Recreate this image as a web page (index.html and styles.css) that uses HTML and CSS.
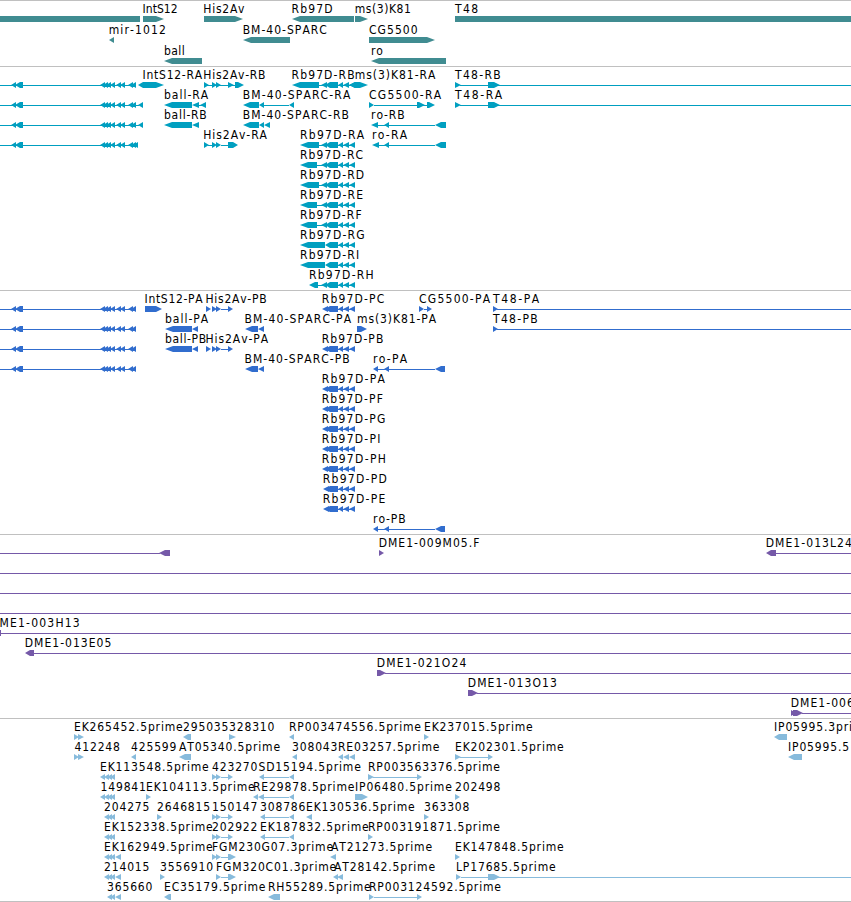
FILE: index.html
```html
<!DOCTYPE html>
<html lang="en">
<head>
    <meta charset="utf-8" />
    <meta name="viewport" content="width=device-width, initial-scale=1" />
    <title>Genome Browser</title>
    <link rel="stylesheet" href="styles.css">
</head>
<body>

<!-- glyphs shared by several rows -->
<svg class="defs">
    <defs>
        <path id="exons" d="M0 16h136v1H0zM11 16l5-3v6zM15 16l5-3h3v6h-3zM100 16l5-3v6zM103 16l5-3v6zM106 16l5-3v6zM110 16l5-3v6zM116 16l5-3v6zM120 16l5-3v6zM128 16l5-3v6zM131 16l5-3v6z"/>
        <path id="rb-tail" d="M325 16l5-3h8v6h-8zM338 16l5-3v6zM343 16l6-3v6zM349 16l6-3v6zM338 16h17v1h-17z"/>
        <path id="rb-gap" d="M317 16h8v1h-8zM321 16l6-3v6z"/>
        <path id="ro" d="M378 16h57v1h-57zM384 16l5-3v6zM435 16l6-3h4v6h-4z"/>
        <path id="his" d="M212 13l5 3-5 3zM216 13l5 3-5 3zM221 16h7v1h-7z"/>
        <path id="his-end" d="M228 13l5 3-5 3z"/>
        <path id="cluster" d="M104 16l5-3v6zM107 16l5-3v6zM110 16l5-3v6z"/>
        <path id="bm" d="M264 16h25v1h-25zM289 16l5-3v6z"/>
    </defs>
</svg>

<div class="tracks">
    <div class="track genes">
        <svg class="row">
            <text x="142.5" y="10" textLength="36">IntS12</text>
            <text x="203.3" y="10" textLength="42">His2Av</text>
            <text x="291.5" y="10" textLength="42">Rb97D</text>
            <text x="354.7" y="10" textLength="57">ms(3)K81</text>
            <text x="455" y="10" textLength="24">T48</text>
            <path d="M0 13h140v6H0z"/>
            <path d="M143 13h13l8 3-8 3h-13z"/>
            <path d="M204 13h31l8 3-8 3h-31z"/>
            <path d="M292 16l8-3h54v6h-54z"/>
            <path d="M355 13h5l8 3-8 3h-5z"/>
            <path d="M455 13h396v6H455z"/>
        </svg>
        <svg class="row">
            <text x="108.7" y="10" textLength="58">mir-1012</text>
            <text x="242.7" y="10" textLength="85">BM-40-SPARC</text>
            <text x="369" y="10" textLength="49.5">CG5500</text>
            <path d="M109 16l5-3v6z"/>
            <path d="M243 16l8-3h39v6h-39z"/>
            <path d="M369 13h58l8 3-8 3h-58z"/>
        </svg>
        <svg class="row">
            <text x="164" y="10" textLength="21.5">ball</text>
            <text x="371" y="10">ro</text>
            <path d="M164 16l8-3h30v6h-30z"/>
            <path d="M371 16l8-3h67v6h-67z"/>
        </svg>
    </div>

    <div class="track transcripts">
        <svg class="row">
            <text x="142.5" y="10" textLength="60.5">IntS12-RA</text>
            <text x="203.3" y="10" textLength="63">His2Av-RB</text>
            <text x="291.5" y="10" textLength="64">Rb97D-RB</text>
            <text x="354.7" y="10" textLength="81.5">ms(3)K81-RA</text>
            <text x="455" y="10" textLength="46.5">T48-RB</text>
            <use href="#exons"/>
            <path d="M138 16l5-3h13l8 3-8 3h-13z"/>
            <path d="M204 13l5 3-5 3zM208 16h27v1h-27zM228 13l6 3-6 3zM235 13h3l6 3-6 3h-3z"/>
            <use href="#his"/>
            <path d="M292 16l8-3h19v6h-19z"/>
            <use href="#rb-gap"/>
            <use href="#rb-tail"/>
            <path d="M349 16l6-3h5l8 3-8 3h-5z"/>
            <path d="M455 13l6 3-6 3zM460 16h391v1H460zM488 13h6l6 3-6 3h-6z"/>
        </svg>
        <svg class="row">
            <text x="164" y="10" textLength="45">ball-RA</text>
            <text x="242.7" y="10" textLength="108.5">BM-40-SPARC-RA</text>
            <text x="369" y="10" textLength="73">CG5500-RA</text>
            <text x="455" y="10" textLength="48">T48-RA</text>
            <use href="#exons"/>
            <path d="M136 16h3v1h-3zM138 16l5-3v6z"/>
            <path d="M164 16l8-3h20v6h-20zM192 16l7-3v6zM200 16l6-3v6zM198 16h3v1h-3z"/>
            <path d="M243 16l7-3h9v6h-9zM259 16l5-3v6z"/>
            <use href="#bm"/>
            <path d="M369 13l5 3-5 3zM374 16h53v1h-53zM417 13h2l6 3-6 3h-2zM427 13h2l6 3-6 3h-2z"/>
            <path d="M455 13l6 3-6 3zM460 16h391v1H460zM488 13h6l6 3-6 3h-6z"/>
        </svg>
        <svg class="row">
            <text x="164" y="10" textLength="43.5">ball-RB</text>
            <text x="242.7" y="10" textLength="107">BM-40-SPARC-RB</text>
            <text x="371" y="10" textLength="34.5">ro-RB</text>
            <use href="#exons"/>
            <path d="M136 16h3v1h-3zM138 16l5-3v6z"/>
            <path d="M164 16l8-3h20v6h-20zM192 16l7-3v6z"/>
            <path d="M243 16l7-3h9v6h-9zM259 16l5-3v6zM264 16l6-3v6z"/>
            <path d="M371 16l7-3v6zM445 13h1v6h-1z"/>
            <use href="#ro"/>
        </svg>
        <svg class="row">
            <text x="203.3" y="10" textLength="64.5">His2Av-RA</text>
            <text x="300" y="10" textLength="65">Rb97D-RA</text>
            <text x="372" y="10" textLength="36">ro-RA</text>
            <use href="#exons"/>
            <path d="M133 16l5-3v6z"/>
            <path d="M204 13l5 3-5 3zM208 16h5v1h-5zM228 13h5l5 3-5 3h-5z"/>
            <use href="#his"/>
            <path d="M300 16l8-3h11v6h-11z"/>
            <use href="#rb-gap"/>
            <use href="#rb-tail"/>
            <path d="M372 16l7-3v6zM445 13h1v6h-1z"/>
            <use href="#ro"/>
        </svg>
        <svg class="row">
            <text x="300" y="10" textLength="64">Rb97D-RC</text>
            <path d="M300 16l8-3h9v6h-9z"/>
            <use href="#rb-gap"/>
            <use href="#rb-tail"/>
        </svg>
        <svg class="row">
            <text x="300" y="10" textLength="65">Rb97D-RD</text>
            <path d="M300 16l8-3h11v6h-11z"/>
            <use href="#rb-gap"/>
            <use href="#rb-tail"/>
        </svg>
        <svg class="row">
            <text x="300" y="10" textLength="64">Rb97D-RE</text>
            <path d="M300 16l8-3h9v6h-9z"/>
            <use href="#rb-gap"/>
            <use href="#rb-tail"/>
        </svg>
        <svg class="row">
            <text x="300" y="10" textLength="62.5">Rb97D-RF</text>
            <path d="M300 16l8-3h9v6h-9z"/>
            <use href="#rb-gap"/>
            <use href="#rb-tail"/>
        </svg>
        <svg class="row">
            <text x="300" y="10" textLength="65.5">Rb97D-RG</text>
            <path d="M300 16l8-3h17v6h-17z"/>
            <use href="#rb-tail"/>
        </svg>
        <svg class="row">
            <text x="300" y="10" textLength="60">Rb97D-RI</text>
            <path d="M300 16l8-3h17v6h-17z"/>
            <use href="#rb-tail"/>
        </svg>
        <svg class="row">
            <text x="309" y="10" textLength="65.5">Rb97D-RH</text>
            <path d="M309 16l6-3h3v6h-3z"/>
            <use href="#rb-gap"/>
            <use href="#rb-tail"/>
        </svg>
    </div>

    <div class="track proteins">
        <svg class="row">
            <text x="144.5" y="10" textLength="59">IntS12-PA</text>
            <text x="205.5" y="10" textLength="62">His2Av-PB</text>
            <text x="321.7" y="10" textLength="63.5">Rb97D-PC</text>
            <text x="419" y="10" textLength="72">CG5500-PA</text>
            <text x="493" y="10" textLength="47">T48-PA</text>
            <use href="#exons"/>
            <path d="M145 13h11l6 3-6 3h-11z"/>
            <path d="M206 13l5 3-5 3z"/>
            <use href="#his"/>
            <use href="#his-end"/>
            <path d="M322 16l6-3v6z"/>
            <use href="#rb-tail"/>
            <path d="M419 13l5 3-5 3zM424 16h3v1h-3zM427 13l5 3-5 3z"/>
            <path d="M493 13l5 3-5 3zM497 16h354v1H497z"/>
        </svg>
        <svg class="row">
            <text x="165" y="10" textLength="44">ball-PA</text>
            <text x="244.5" y="10" textLength="107.5">BM-40-SPARC-PA</text>
            <text x="357" y="10" textLength="80">ms(3)K81-PA</text>
            <text x="493" y="10" textLength="45.5">T48-PB</text>
            <use href="#exons"/>
            <path d="M165 16l8-3h19v6h-19zM192 16l6-3v6z"/>
            <path d="M245 16l7-3h6v6h-6zM258 16l6-3v6z"/>
            <path d="M357 13h4l6 3-6 3h-4z"/>
            <path d="M493 13l5 3-5 3zM497 16h354v1H497z"/>
        </svg>
        <svg class="row">
            <text x="165" y="10" textLength="42">ball-PB</text>
            <text x="205.5" y="10" textLength="63.5">His2Av-PA</text>
            <text x="321.7" y="10" textLength="62.5">Rb97D-PB</text>
            <use href="#exons"/>
            <path d="M165 16l8-3h19v6h-19zM192 16l6-3v6z"/>
            <path d="M206 13l5 3-5 3z"/>
            <use href="#his"/>
            <use href="#his-end"/>
            <path d="M322 16l6-3v6z"/>
            <use href="#rb-tail"/>
        </svg>
        <svg class="row">
            <text x="244.5" y="10" textLength="106">BM-40-SPARC-PB</text>
            <text x="373" y="10" textLength="35">ro-PA</text>
            <use href="#exons"/>
            <path d="M245 16l7-3h6v6h-6zM258 16l6-3v6z"/>
            <path d="M373 16l5-3v6z"/>
            <use href="#ro"/>
        </svg>
        <svg class="row">
            <text x="321.7" y="10" textLength="64">Rb97D-PA</text>
            <path d="M322 16l6-3v6z"/>
            <use href="#rb-tail"/>
        </svg>
        <svg class="row">
            <text x="321.7" y="10" textLength="62">Rb97D-PF</text>
            <path d="M322 16l6-3v6z"/>
            <use href="#rb-tail"/>
        </svg>
        <svg class="row">
            <text x="321.7" y="10" textLength="64.5">Rb97D-PG</text>
            <path d="M322 16l6-3v6z"/>
            <use href="#rb-tail"/>
        </svg>
        <svg class="row">
            <text x="321.7" y="10" textLength="59.5">Rb97D-PI</text>
            <path d="M322 16l6-3v6z"/>
            <use href="#rb-tail"/>
        </svg>
        <svg class="row">
            <text x="321.7" y="10" textLength="65">Rb97D-PH</text>
            <path d="M322 16l6-3v6z"/>
            <use href="#rb-tail"/>
        </svg>
        <svg class="row">
            <text x="322.7" y="10" textLength="65">Rb97D-PD</text>
            <path d="M323 16l6-3v6z"/>
            <use href="#rb-tail"/>
        </svg>
        <svg class="row">
            <text x="322.7" y="10" textLength="63.5">Rb97D-PE</text>
            <path d="M323 16l6-3v6z"/>
            <use href="#rb-tail"/>
        </svg>
        <svg class="row">
            <text x="373" y="10" textLength="33.5">ro-PB</text>
            <path d="M373 16l5-3v6z"/>
            <use href="#ro"/>
        </svg>
    </div>

    <div class="track clones">
        <svg class="row">
            <text x="378.7" y="10" textLength="101.5">DME1-009M05.F</text>
            <text x="765.7" y="10" textLength="87">DME1-013L24</text>
            <path d="M0 16h160v1H0zM159 16l6-3h5v6h-5z"/>
            <path d="M379 13l5 3-5 3z"/>
            <path d="M766 16l5-3h5v6h-5zM776 16h75v1h-75z"/>
        </svg>
        <svg class="row"><path d="M0 16h851v1H0z"/></svg>
        <svg class="row"><path d="M0 16h851v1H0z"/></svg>
        <svg class="row"><path d="M0 16h851v1H0z"/></svg>
        <svg class="row">
            <text x="-0.5" y="10" textLength="81">ME1-003H13</text>
            <path d="M0 13h1v6H0zM0 16h851v1H0z"/>
        </svg>
        <svg class="row">
            <text x="24.7" y="10" textLength="87.5">DME1-013E05</text>
            <path d="M25 16l5-3h4v6h-4zM34 16h817v1H34z"/>
        </svg>
        <svg class="row">
            <text x="376.7" y="10" textLength="90.5">DME1-021O24</text>
            <path d="M377 13h3l6 3-6 3h-3zM385 16h466v1H385z"/>
        </svg>
        <svg class="row">
            <text x="467.7" y="10" textLength="90">DME1-013O13</text>
            <path d="M468 13h4l6 3-6 3h-4zM477 16h374v1H477z"/>
        </svg>
        <svg class="row">
            <text x="790.7" y="10" textLength="64">DME1-006</text>
            <path d="M791 13l5 3-5 3zM793 13h4l6 3-6 3h-4zM802 16h49v1h-49z"/>
        </svg>
    </div>

    <div class="track cdnas">
        <svg class="row">
            <text x="74" y="10">EK265452.5prime</text>
            <text x="183" y="10">295035</text>
            <text x="229" y="10">328310</text>
            <text x="289" y="10">RP003474556.5prime</text>
            <text x="424" y="10">EK237015.5prime</text>
            <text x="774" y="10">IP05995.3pri</text>
            <path d="M74 13l5 3-5 3zM78 13l6 3-6 3z"/>
            <path d="M183 16l5-3h3v6h-3z"/>
            <path d="M229 13l7 3-7 3z"/>
            <path d="M289 16l5-3v6z"/>
            <path d="M424 13l5 3-5 3z"/>
            <path d="M774 16l5-3h8v6h-8z"/>
        </svg>
        <svg class="row">
            <text x="74.5" y="10">412248</text>
            <text x="131" y="10">425599</text>
            <text x="179" y="10">AT05340.5prime</text>
            <text x="292" y="10">308043</text>
            <text x="338" y="10">RE03257.5prime</text>
            <text x="455" y="10">EK202301.5prime</text>
            <text x="788" y="10">IP05995.5</text>
            <path d="M74 13l5 3-5 3zM78 13l6 3-6 3z"/>
            <path d="M131 16l5-3v6z"/>
            <path d="M179 16l6-3h6v6h-6z"/>
            <path d="M292 16l5-3v6z"/>
            <path d="M338 16l5-3v6zM343 16l6-3v6zM349 16l6-3v6z"/>
            <path d="M455 13l6 3-6 3zM460 16h28v1h-28zM488 13l5 3-5 3z"/>
            <path d="M788 16l6-3h8v6h-8z"/>
        </svg>
        <svg class="row">
            <text x="100" y="10">EK113548.5prime</text>
            <text x="212" y="10">423270</text>
            <text x="258.5" y="10">SD15194.5prime</text>
            <text x="368" y="10">RP003563376.5prime</text>
            <path d="M100 16l5-3v6z"/>
            <use href="#cluster"/>
            <use href="#his"/>
            <use href="#his-end"/>
            <path d="M259 16l5-3v6z"/>
            <use href="#bm"/>
            <path d="M368 13l6 3-6 3zM373 16h44v1h-44zM417 13l5 3-5 3z"/>
        </svg>
        <svg class="row">
            <text x="100.5" y="10">149841</text>
            <text x="146" y="10">EK104113.5prime</text>
            <text x="253" y="10">RE29878.5prime</text>
            <text x="355" y="10">IP06480.5prime</text>
            <text x="455" y="10">202498</text>
            <path d="M100 16l5-3v6z"/>
            <use href="#cluster"/>
            <path d="M146 13l5 3-5 3z"/>
            <path d="M253 16l5-3v6zM258 16l6-3v6z"/>
            <use href="#bm"/>
            <path d="M355 13h7l6 3-6 3h-7z"/>
            <path d="M455 13l5 3-5 3z"/>
        </svg>
        <svg class="row">
            <text x="104" y="10">204275</text>
            <text x="157" y="10">2646815</text>
            <text x="212" y="10">150147</text>
            <text x="260" y="10">308786</text>
            <text x="306" y="10">EK130536.5prime</text>
            <text x="424" y="10">363308</text>
            <use href="#cluster"/>
            <path d="M157 13l5 3-5 3z"/>
            <use href="#his"/>
            <use href="#his-end"/>
            <path d="M260 16l5-3v6z"/>
            <use href="#bm"/>
            <path d="M306 16l6-3v6z"/>
            <path d="M424 13l5 3-5 3z"/>
        </svg>
        <svg class="row">
            <text x="104" y="10">EK152338.5prime</text>
            <text x="212" y="10">202922</text>
            <text x="260" y="10">EK187832.5prime</text>
            <text x="368" y="10">RP003191871.5prime</text>
            <use href="#cluster"/>
            <use href="#his"/>
            <use href="#his-end"/>
            <path d="M260 16l5-3v6z"/>
            <use href="#bm"/>
            <path d="M368 13l5 3-5 3z"/>
        </svg>
        <svg class="row">
            <text x="104" y="10">EK162949.5prime</text>
            <text x="212" y="10">FGM230G07.3prime</text>
            <text x="331" y="10">AT21273.5prime</text>
            <text x="455" y="10">EK147848.5prime</text>
            <use href="#cluster"/>
            <path d="M115 16l6-3v6z"/>
            <use href="#his"/>
            <path d="M228 13h2l6 3-6 3h-2z"/>
            <path d="M330 16l6-3v6z"/>
            <path d="M455 13l5 3-5 3z"/>
        </svg>
        <svg class="row">
            <text x="104" y="10">214015</text>
            <text x="160" y="10">3556910</text>
            <text x="216" y="10">FGM320C01.3prime</text>
            <text x="334" y="10">AT28142.5prime</text>
            <text x="456" y="10">LP17685.5prime</text>
            <use href="#cluster"/>
            <path d="M115 16l6-3v6z"/>
            <path d="M160 13l5 3-5 3z"/>
            <path d="M216 13l5 3-5 3zM221 16h7v1h-7zM228 13h2l6 3-6 3h-2z"/>
            <path d="M333 16l5-3v6zM337 16l6-3v6z"/>
            <path d="M456 13l5 3-5 3zM461 16h390v1H461zM488 13h6l6 3-6 3h-6z"/>
        </svg>
        <svg class="row">
            <text x="107" y="10">365660</text>
            <text x="164" y="10">EC35179.5prime</text>
            <text x="268" y="10">RH55289.5prime</text>
            <text x="369" y="10">RP003124592.5prime</text>
            <path d="M107 16l5-3v6zM110 16l5-3v6zM115 16l6-3v6z"/>
            <path d="M164 16l5-3h2v6h-2z"/>
            <path d="M268 16l6-3h6v6h-6z"/>
            <path d="M369 13l5 3-5 3zM374 16h43v1h-43zM417 13l5 3-5 3z"/>
        </svg>
    </div>
</div>

</body>
</html>
```
FILE: styles.css
```css
* {
    margin: 0;
    padding: 0;
}

body {
    overflow: hidden;
    background-color: white;
}

.defs {
    display: none;
}

.tracks {
    width: 851px;
    border-bottom: 1px solid #c0c0c0;
}

.track {
    padding: 2px 0 1px;
    border-top: 1px solid #c0c0c0;
}

.row {
    display: block;
    width: 100%;
    height: 20px;
}

.row text {
    font-family: "DejaVu Sans Condensed", "DejaVu Sans", sans-serif;
    font-size: 12px;
    font-stretch: condensed;
    font-kerning: none;
    letter-spacing: 0.85px;
    fill: black;
}

.genes {
    padding-bottom: 0;
    fill: #408c91;
}

.genes .row {
    height: 21px;
}

.transcripts {
    fill: #009fc0;
}

.proteins {
    fill: #316dce;
}

.clones {
    fill: #7559a8;
}

.cdnas {
    padding-bottom: 0;
    fill: #87bbdc;
}
```
